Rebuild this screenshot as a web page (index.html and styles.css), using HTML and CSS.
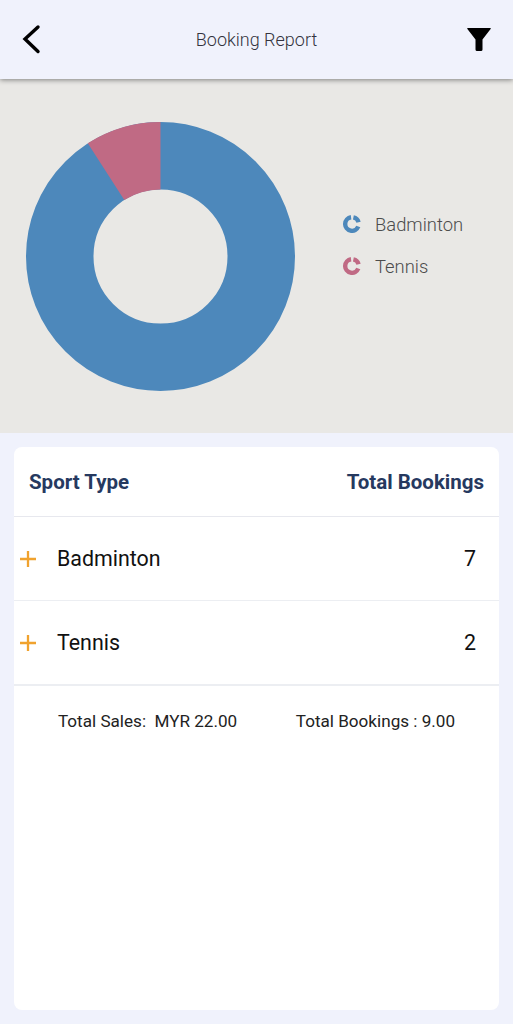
FILE: index.html
```html
<!DOCTYPE html>
<html lang="en">
<head>
<meta charset="utf-8">
<title>Booking Report</title>
<link rel="stylesheet" href="styles.css">
</head>
<body>
<header class="topbar">
  <svg class="back" width="24" height="30" viewBox="0 0 24 30"><path d="M16 3 L3 15 L16 27.500" fill="none" stroke="#000" stroke-width="3.400" stroke-linecap="round" stroke-linejoin="miter"/></svg>
  <h1 class="title">Booking Report</h1>
  <svg class="filter" width="24" height="24" viewBox="0 0 24 24"><path d="M0.500 1 H23.500 Q24 1 23.600 2 L15.500 12.500 V22.500 Q15.500 24 14 24 H10 Q8.500 24 8.500 22.500 V12.500 L0.400 2 Q0 1 0.500 1 Z" fill="#000"/></svg>
</header>
<section class="chart">
  <svg class="donut" width="270" height="270" viewBox="-135.500 -135.500 270 270">
    <circle r="100.750" fill="none" stroke="#4d88bb" stroke-width="67.500"/>
    <path d="M0 -134.500 A134.500 134.500 0 0 0 -72.700 -113.200 L-36.200 -56.400 A67 67 0 0 1 0 -67 Z" fill="#c06a84"/>
  </svg>
  <ul class="legend">
    <li class="legend-item">
      <svg width="18" height="18" viewBox="0 0 18 18"><path d="M15.300 11.550 A6.800 6.800 0 1 1 8.050 2.270" fill="none" stroke="#4d88bb" stroke-width="4.400"/><path d="M10.400 2.350 A6.800 6.800 0 0 1 15.570 7.240" fill="none" stroke="#4d88bb" stroke-width="4.400"/></svg>
      <span>Badminton</span>
    </li>
    <li class="legend-item">
      <svg width="18" height="18" viewBox="0 0 18 18"><path d="M15.300 11.550 A6.800 6.800 0 1 1 8.050 2.270" fill="none" stroke="#c06a84" stroke-width="4.400"/><path d="M10.400 2.350 A6.800 6.800 0 0 1 15.570 7.240" fill="none" stroke="#c06a84" stroke-width="4.400"/></svg>
      <span>Tennis</span>
    </li>
  </ul>
</section>
<main class="card">
  <div class="card-head">
    <span>Sport Type</span>
    <span>Total Bookings</span>
  </div>
  <div class="row">
    <svg class="plus" width="18" height="18" viewBox="0 0 18 18"><path d="M9 1 V17 M1 9 H17" stroke="#f0a22e" stroke-width="2.300"/></svg>
    <span class="row-name">Badminton</span>
    <span class="row-value">7</span>
  </div>
  <div class="row">
    <svg class="plus" width="18" height="18" viewBox="0 0 18 18"><path d="M9 1 V17 M1 9 H17" stroke="#f0a22e" stroke-width="2.300"/></svg>
    <span class="row-name">Tennis</span>
    <span class="row-value">2</span>
  </div>
  <div class="totals">
    <span>Total Sales:&nbsp; MYR 22.00</span>
    <span>Total Bookings : 9.00</span>
  </div>
</main>
</body>
</html>
```
FILE: styles.css
```css
* { box-sizing: border-box; }
html, body { margin: 0; padding: 0; }
body {
  width: 513px;
  height: 1024px;
  overflow: hidden;
  background: #f0f2fc;
  font-family: Roboto, "Liberation Sans", sans-serif;
  display: flex;
  flex-direction: column;
}
.topbar {
  position: relative;
  z-index: 1;
  height: 79px;
  flex: none;
  background: #f0f2fc;
  box-shadow: 0 1px 5px rgba(0, 0, 0, 0.45);
  display: flex;
  align-items: center;
  justify-content: space-between;
  padding: 0 22px;
}
.back { margin-top: -1px; }
.filter { margin-top: -2px; }
.title {
  margin: 0;
  font-size: 18px;
  font-weight: 300;
  color: #33333d;
}
.chart {
  height: 354px;
  flex: none;
  background: #e9e8e5;
  display: flex;
  align-items: center;
  padding-left: 25px;
}
.donut { display: block; }
.legend {
  list-style: none;
  margin: -22px 0 0 48px;
  padding: 0;
  display: flex;
  flex-direction: column;
  gap: 21px;
}
.legend-item {
  display: flex;
  align-items: center;
  gap: 14px;
  height: 21px;
  font-size: 18.400px;
  font-weight: 300;
  color: #4c4c4c;
}
.card {
  margin: 14px;
  flex: 1;
  background: #fff;
  border-radius: 8px;
}
.card-head {
  height: 70px;
  display: flex;
  justify-content: space-between;
  align-items: center;
  padding: 0 15px;
  font-size: 20.500px;
  font-weight: 700;
  color: #26395f;
  border-bottom: 1px solid #e7e8ee;
}
.row {
  height: 84px;
  display: flex;
  align-items: center;
  padding: 0 23px 0 5px;
  border-bottom: 1px solid #eceef2;
  font-size: 21.400px;
  color: #111;
}
.row:nth-of-type(3) { height: 85px; border-bottom-width: 2px; }
.row-name { margin-left: 20px; flex: 1; }
.totals {
  display: flex;
  justify-content: space-between;
  padding: 25px 44px 0;
  font-size: 17.100px;
  color: #222;
}
```
